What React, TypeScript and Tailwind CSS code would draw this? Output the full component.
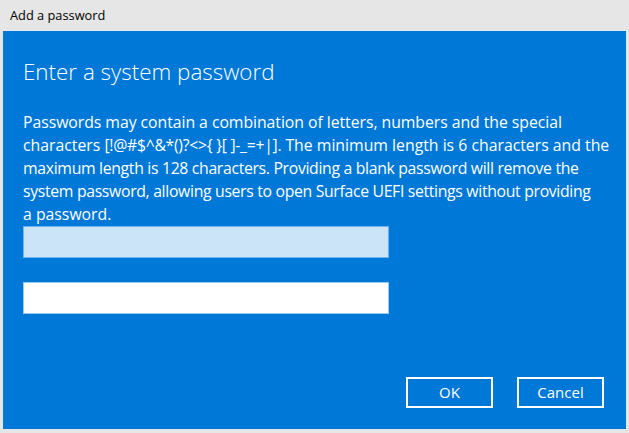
export default function App() {
  const font = { fontFamily: '"Segoe UI", "Open Sans", "Noto Sans", sans-serif' };
  return (
    <div className="w-[629px] h-[433px] bg-[#e6e6e6] flex flex-col" style={font}>
      <div className="h-[31px] shrink-0 pl-[10px] flex items-center text-[12.8px] text-black">
        Add a password
      </div>
      <div className="mx-[3px] h-[398px] bg-[#0078d7] text-white flex flex-col pl-[20px] pr-[22px]">
        <h1 className="mt-[26px] text-[22.4px] leading-[30px] font-light">Enter a system password</h1>
        <p className="mt-[24px] text-[15.8px] leading-[23px] whitespace-nowrap">
          <span className="tracking-[-0.05px]">Passwords may contain a combination of letters, numbers and the special</span>
          <br />
          characters <span className="tracking-[-0.3px]">[!@#$^&amp;*()?&lt;&gt;{'{'} {'}'}[ ]-_=+|].</span> The minimum length is 6 characters and the
          <br />
          <span className="tracking-[-0.33px]">maximum length is 128 characters. Providing a blank password will remove the</span>
          <br />
          <span className="tracking-[-0.33px]">system password, allowing users to open Surface UEFI settings without providing</span>
          <br />
          a password.
        </p>
        <div className="mt-0 w-[366px] h-[32px] bg-[#cce4f7] border border-[#70b3ec]" />
        <div className="mt-[24px] w-[366px] h-[32px] bg-white border border-[#99c9ef]" />
        <div className="mt-[63px] flex justify-end gap-[24px]">
          <button className="w-[87px] h-[31px] border-2 border-white text-[15px] text-white flex items-center justify-center">OK</button>
          <button className="w-[87px] h-[31px] border-2 border-white text-[15px] text-white flex items-center justify-center">Cancel</button>
        </div>
      </div>
    </div>
  );
}
